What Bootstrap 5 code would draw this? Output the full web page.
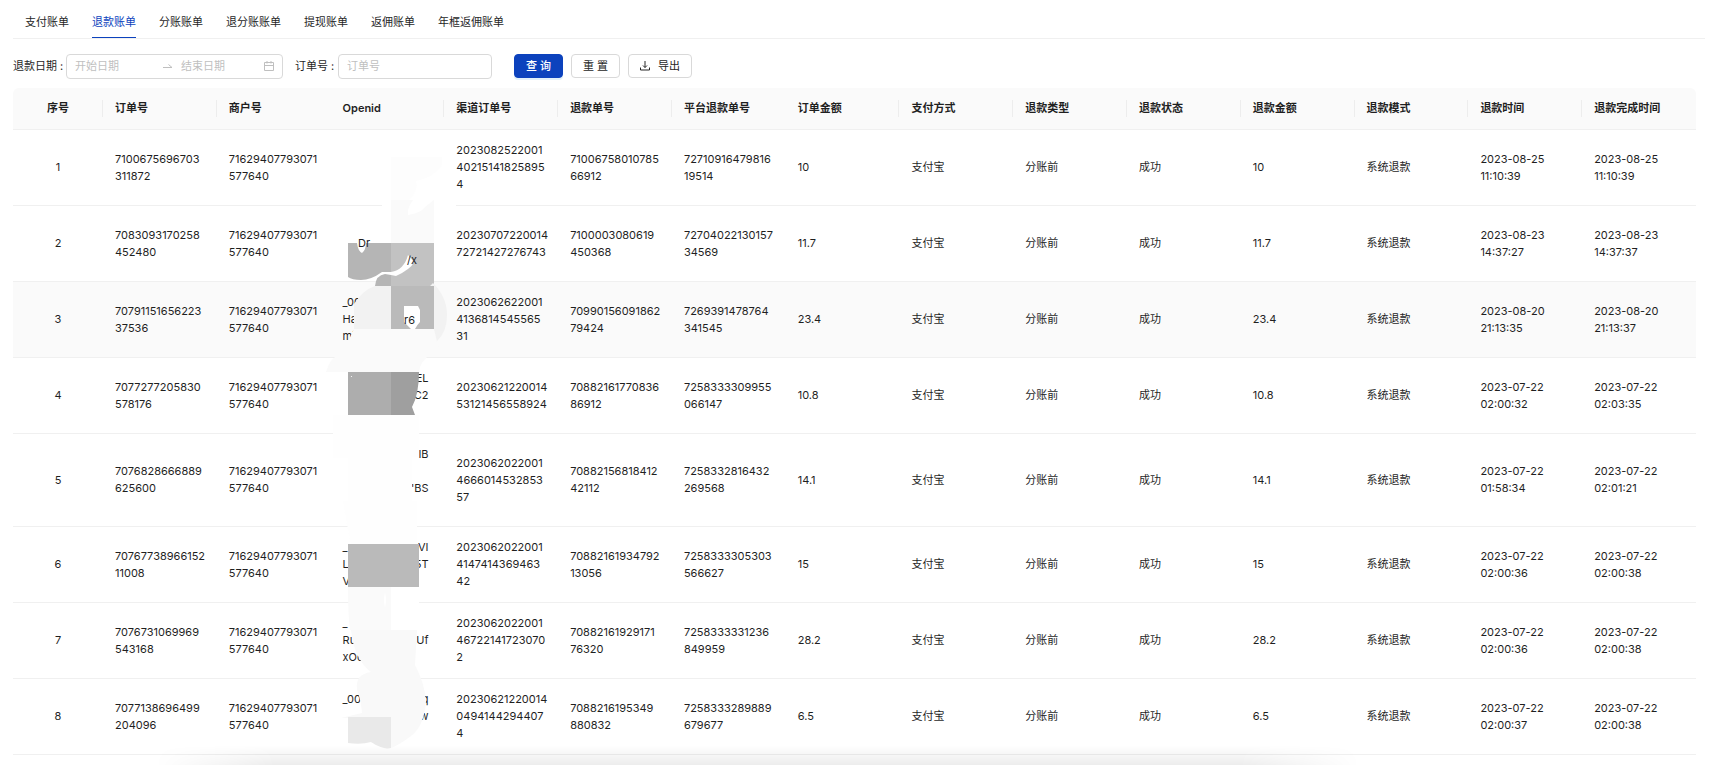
<!DOCTYPE html>
<html lang="zh-CN">
<head>
<meta charset="utf-8">
<meta name="viewport" content="width=device-width, initial-scale=1">
<title>退款账单</title>
<link rel="stylesheet" href="https://cdn.jsdelivr.net/npm/bootstrap@5.3.0/dist/css/bootstrap.min.css">
<style>
  body { font-family: Inter, "Noto Sans CJK SC", sans-serif; font-size: 11px; line-height: 17px; color: #1f1f1f; background: #fff; overflow-x: hidden; }
  .bill-page { padding: 0 26px 0 13px; }
  .bill-tabs { border-bottom: 1px solid #f0f0f0; margin-right: -9px; padding-left: 12px; gap: 23px; height: 39px; }
  .bill-tabs .nav-link { padding: 14px 0 7px; color: #262626; border-bottom: 1px solid transparent; font-size: 11px; }
  .bill-tabs .nav-link.active { color: #0c42bd; border-bottom-color: #0c42bd; }
  .filter-row { height: 24px; margin: 15px 0 10px; }
  .filter-row label { white-space: nowrap; }
  .label-date { width: 53px; }
  .label-order { width: 43px; margin-left: 12px; }
  .box { border: 1px solid #d9d9d9; border-radius: 4px; height: 25px; background: #fff; padding: 0 8px; }
  .box input { border: 0; outline: 0; background: none; padding: 0; font-size: 11px; min-width: 0; color: #1f1f1f; }
  .box input::placeholder { color: #bfbfbf; opacity: 1; }
  .range-box { width: 217px; }
  .range-box input { width: 80px; }
  .order-box { width: 154px; }
  .act { height: 24px; border: 1px solid #d9d9d9; border-radius: 4px; background: #fff; padding: 0 11px; font-size: 11px; line-height: 17px; color: #262626; }
  .act-main { background: #0c42bd; border-color: #0c42bd; color: #fff; font-weight: 500; box-shadow: 0 2px 0 #e2f0fa; margin-left: 22px; }
  .bill-table { table-layout: fixed; margin: 0; width: 100%; border-collapse: separate; border-spacing: 0; }
  .bill-table th, .bill-table td { padding: 12px; border-bottom: 1px solid #f0f0f0; vertical-align: middle; white-space: nowrap; }
  .bill-table th { background: #fafafa; font-weight: 600; position: relative; }
  .bill-table th:first-child { width: 90px; border-top-left-radius: 6px; }
  .bill-table th:last-child { border-top-right-radius: 6px; }
  .bill-table tr > :first-child { text-align: center; }
  .bill-table th.sep::before { content: ""; position: absolute; right: 0; top: 12px; height: 17px; width: 1px; background: #ededed; }
  .bill-table tr.hovered td { background: #fafafa; }
  .oid { display: flex; justify-content: space-between; width: 86px; height: 17px; }
  .redact { position: absolute; left: -10px; top: 0; z-index: 2; pointer-events: none; }
  .redact text { font-weight: 400; font-size: 11px; fill: #1f1f1f; }
  .bottom-shade { position: absolute; bottom: 0; left: 9%; right: 21%; height: 20px; pointer-events: none; background: linear-gradient(#0000, #00000012); -webkit-mask-image: linear-gradient(90deg, transparent, #000 10%, #000 90%, transparent); mask-image: linear-gradient(90deg, transparent, #000 10%, #000 90%, transparent); }
</style>
</head>
<body class="position-relative min-vh-100">
<main class="bill-page">
  <nav class="nav bill-tabs flex-nowrap text-nowrap">
    <a class="nav-link" href="#">支付账单</a>
    <a class="nav-link active" href="#" aria-current="page">退款账单</a>
    <a class="nav-link" href="#">分账账单</a>
    <a class="nav-link" href="#">退分账账单</a>
    <a class="nav-link" href="#">提现账单</a>
    <a class="nav-link" href="#">返佣账单</a>
    <a class="nav-link" href="#">年框返佣账单</a>
  </nav>
  <form class="filter-row d-flex align-items-center">
    <label class="label-date" for="from">退款日期 :</label>
    <div class="box range-box d-flex align-items-center">
      <input id="from" type="text" placeholder="开始日期">
      <svg class="flex-shrink-0 me-2" width="18" height="10" viewBox="0 0 18 10" fill="none" stroke="#bfbfbf"><path d="M8 6.500H17L13.500 3.500"/></svg>
      <input type="text" placeholder="结束日期" aria-label="结束日期">
      <svg class="ms-auto flex-shrink-0" width="10" height="10" viewBox="0 0 10 10" fill="none" stroke="#bfbfbf"><path d="M.5 1.500h9v8h-9zM.5 4.500h9M3 0v2.500M7 0v2.500"/></svg>
    </div>
    <label for="order" class="label-order">订单号 :</label>
    <div class="box order-box d-flex align-items-center"><input id="order" class="w-100" type="text" placeholder="订单号"></div>
    <button type="button" class="act act-main">查 询</button>
    <button type="button" class="act ms-2">重 置</button>
    <button type="button" class="act ms-2 d-flex align-items-center"><svg class="me-2" width="10" height="10" viewBox="0 0 10 10" fill="none" stroke="#262626"><path d="M5 0V6.500M3 4.500L5 6.500L7 4.500M.5 6.500V9H9.500V6.500"/></svg>导出</button>
  </form>
  <table class="bill-table">
    <thead><tr>
      <th class="sep">序号</th><th class="sep">订单号</th><th>商户号</th>
      <th class="sep">Openid
        <svg class="redact" width="140" height="677" viewBox="320 88 140 677" aria-hidden="true">
          <path fill="#fff" d="M381 157H455V215H446L440 225H436V243H347V225H381Z"/>
          <path fill="#fdfdfd" d="M390 157H441V165Q432 178 415 181Q418 190 408 200H390Z"/>
          <path fill="#fafafa" d="M390 200H412Q406 208 407 215Q420 213 424 207L433 200V243H390Z"/>
          <path fill="#fff" d="M347 243H433V286H374L380 281H347Z"/>
          <path fill="#b5b5b5" d="M347 243H356Q357 251 361 253Q365 250 365 243H390V272H381Q370 280 360 280Q351 280 347 277Z"/>
          <path fill="#b5b5b5" d="M374 286Q375 275 384 274L390 275V286Z"/>
          <path fill="#c2c2c2" d="M390 243H433V286H390V275L395 276Q410 269 413 262L407 255Q403 270 390 272Z"/>
          <path fill="#f2f2f2" d="M374 286H429L432 283Q446 297 446 315Q446 332 436 341Q430 347 427 351H353V304Q362 290 374 286Z"/>
          <path fill="#fafafa" d="M325 372Q329 357 342 352L353 329H433L438 350L431 353Q419 361 418 372Z"/>
          <path fill="#bababa" d="M390 286H433V329H390Z"/>
          <path fill="#fff" d="M403 306H417L419 310V322Q416 325 414 329H410L403 322Z"/>
          <path fill="#adadad" d="M347 372H390V415H347Z"/>
          <path fill="#9f9f9f" d="M390 372H418Q418 394 411 407L414 415H390Z"/>
          <circle fill="#fff" cx="350.500" cy="376.500" r=".6"/>
          <path fill="#fefefe" d="M332 415H418V457H411V501H416V544H350Q346 525 342 501H347V458H332Z"/>
          <path fill="#bababa" d="M347 544H418V587H347Z"/>
          <path fill="#fff" d="M390 587H418V630H390Z"/>
          <path fill="#fafafa" d="M347 587H390V630H349Q347 615 347 587Z"/>
          <path fill="#fff" d="M384 592Q386 600 384 608Q382 600 384 592"/>
          <path fill="#f9f9f9" d="M350 630H416L414 665Q424 684 425 702Q423 726 410 736Q398 745 390 748L385 749L370 742H347V718H340L361 713Q360 700 356 690Q354 674 370 672Q353 659 350 630Z"/>
          <path fill="#e9e9e9" d="M347 717H390V748Q382 750 370 742Q360 745 347 743Z"/>
          <text x="357" y="247">Dr</text>
          <text x="406" y="264">/x</text>
          <text x="403" y="324">r6</text>
        </svg>
      </th>
      <th class="sep">渠道订单号</th><th class="sep">退款单号</th><th>平台退款单号</th><th class="sep">订单金额</th><th class="sep">支付方式</th><th class="sep">退款类型</th><th class="sep">退款状态</th><th class="sep">退款金额</th><th class="sep">退款模式</th><th class="sep">退款时间</th><th>退款完成时间</th>
    </tr></thead>
    <tbody>
    <tr><td>1</td><td>7100675696703<br>311872</td><td>71629407793071<br>577640</td><td></td><td>2023082522001<br>40215141825895<br>4</td><td>71006758010785<br>66912</td><td>72710916479816<br>19514</td><td>10</td><td>支付宝</td><td>分账前</td><td>成功</td><td>10</td><td>系统退款</td><td>2023-08-25<br>11:10:39</td><td>2023-08-25<br>11:10:39</td></tr>
    <tr><td>2</td><td>7083093170258<br>452480</td><td>71629407793071<br>577640</td><td><div class="oid"></div><div class="oid"></div><div class="oid"></div></td><td>20230707220014<br>72721427276743</td><td>7100003080619<br>450368</td><td>72704022130157<br>34569</td><td>11.7</td><td>支付宝</td><td>分账前</td><td>成功</td><td>11.7</td><td>系统退款</td><td>2023-08-23<br>14:37:27</td><td>2023-08-23<br>14:37:37</td></tr>
    <tr class="hovered"><td>3</td><td>70791151656223<br>37536</td><td>71629407793071<br>577640</td><td><div class="oid">_00</div><div class="oid">Ha</div><div class="oid">mi</div></td><td>2023062622001<br>4136814545565<br>31</td><td>70990156091862<br>79424</td><td>7269391478764<br>341545</td><td>23.4</td><td>支付宝</td><td>分账前</td><td>成功</td><td>23.4</td><td>系统退款</td><td>2023-08-20<br>21:13:35</td><td>2023-08-20<br>21:13:37</td></tr>
    <tr><td>4</td><td>7077277205830<br>578176</td><td>71629407793071<br>577640</td><td><div class="oid"><span></span><span>EL</span></div><div class="oid"><span></span><span>C2</span></div><div class="oid"></div></td><td>20230621220014<br>53121456558924</td><td>70882161770836<br>86912</td><td>7258333309955<br>066147</td><td>10.8</td><td>支付宝</td><td>分账前</td><td>成功</td><td>10.8</td><td>系统退款</td><td>2023-07-22<br>02:00:32</td><td>2023-07-22<br>02:03:35</td></tr>
    <tr><td>5</td><td>7076828666889<br>625600</td><td>71629407793071<br>577640</td><td><div class="oid"><span></span><span>IB</span></div><div class="oid"></div><div class="oid"><span></span><span>'BS</span></div><div class="oid"></div></td><td>2023062022001<br>4666014532853<br>57</td><td>70882156818412<br>42112</td><td>7258332816432<br>269568</td><td>14.1</td><td>支付宝</td><td>分账前</td><td>成功</td><td>14.1</td><td>系统退款</td><td>2023-07-22<br>01:58:34</td><td>2023-07-22<br>02:01:21</td></tr>
    <tr><td>6</td><td>70767738966152<br>11008</td><td>71629407793071<br>577640</td><td><div class="oid"><span>_</span><span>VI</span></div><div class="oid"><span>L</span><span>5T</span></div><div class="oid">V</div></td><td>2023062022001<br>4147414369463<br>42</td><td>70882161934792<br>13056</td><td>7258333305303<br>566627</td><td>15</td><td>支付宝</td><td>分账前</td><td>成功</td><td>15</td><td>系统退款</td><td>2023-07-22<br>02:00:36</td><td>2023-07-22<br>02:00:38</td></tr>
    <tr><td>7</td><td>7076731069969<br>543168</td><td>71629407793071<br>577640</td><td><div class="oid">_</div><div class="oid"><span>Ru</span><span>xUf</span></div><div class="oid">xOo</div></td><td>2023062022001<br>46722141723070<br>2</td><td>70882161929171<br>76320</td><td>7258333331236<br>849959</td><td>28.2</td><td>支付宝</td><td>分账前</td><td>成功</td><td>28.2</td><td>系统退款</td><td>2023-07-22<br>02:00:36</td><td>2023-07-22<br>02:00:38</td></tr>
    <tr><td>8</td><td>7077138696499<br>204096</td><td>71629407793071<br>577640</td><td><div class="oid"><span>_00</span><span>q</span></div><div class="oid"><span></span><span>w</span></div><div class="oid"><span></span><span class="pe-4">.</span></div></td><td>20230621220014<br>0494144294407<br>4</td><td>7088216195349<br>880832</td><td>7258333289889<br>679677</td><td>6.5</td><td>支付宝</td><td>分账前</td><td>成功</td><td>6.5</td><td>系统退款</td><td>2023-07-22<br>02:00:37</td><td>2023-07-22<br>02:00:38</td></tr>
    </tbody>
  </table>
</main>
<div class="bottom-shade"></div>
<script src="https://cdn.jsdelivr.net/npm/bootstrap@5.3.0/dist/js/bootstrap.bundle.min.js"></script>
</body>
</html>
